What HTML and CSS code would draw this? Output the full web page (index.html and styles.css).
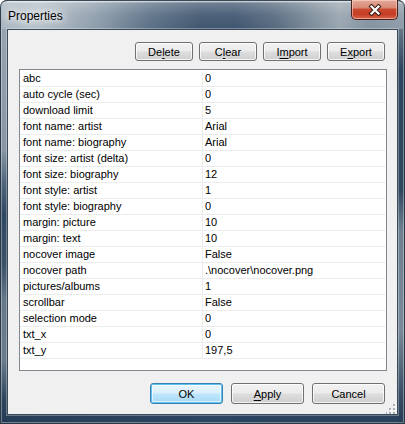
FILE: index.html
```html
<!DOCTYPE html>
<html>
<head>
<meta charset="utf-8">
<link rel="stylesheet" href="styles.css">
</head>
<body>
<div class="window">
  <div class="titlebar">
    <span class="title">Properties</span>
    <div class="close">
      <svg width="14" height="12" viewBox="0 0 14 12">
        <path d="M3.5 2.5 L10.5 9.5 M10.5 2.5 L3.5 9.5" stroke="#3b1c16" stroke-width="4.2" stroke-linecap="square" fill="none"/>
        <path d="M3.5 2.5 L10.5 9.5 M10.5 2.5 L3.5 9.5" stroke="#ffffff" stroke-width="2.2" stroke-linecap="square" fill="none"/>
      </svg>
    </div>
  </div>
  <div class="client">
    <div class="toolbar">
      <button class="btn small">De<u>l</u>ete</button>
      <button class="btn small">C<u>l</u>ear</button>
      <button class="btn small">I<u>m</u>port</button>
      <button class="btn small">E<u>x</u>port</button>
    </div>
    <div class="list">
      <div class="row"><div class="name">abc</div><div class="val">0</div></div>
      <div class="row"><div class="name">auto cycle (sec)</div><div class="val">0</div></div>
      <div class="row"><div class="name">download limit</div><div class="val">5</div></div>
      <div class="row"><div class="name">font name: artist</div><div class="val">Arial</div></div>
      <div class="row"><div class="name">font name: biography</div><div class="val">Arial</div></div>
      <div class="row"><div class="name">font size: artist (delta)</div><div class="val">0</div></div>
      <div class="row"><div class="name">font size: biography</div><div class="val">12</div></div>
      <div class="row"><div class="name">font style: artist</div><div class="val">1</div></div>
      <div class="row"><div class="name">font style: biography</div><div class="val">0</div></div>
      <div class="row"><div class="name">margin: picture</div><div class="val">10</div></div>
      <div class="row"><div class="name">margin: text</div><div class="val">10</div></div>
      <div class="row"><div class="name">nocover image</div><div class="val">False</div></div>
      <div class="row"><div class="name">nocover path</div><div class="val">.\nocover\nocover.png</div></div>
      <div class="row"><div class="name">pictures/albums</div><div class="val">1</div></div>
      <div class="row"><div class="name">scrollbar</div><div class="val">False</div></div>
      <div class="row"><div class="name">selection mode</div><div class="val">0</div></div>
      <div class="row"><div class="name">txt_x</div><div class="val">0</div></div>
      <div class="row"><div class="name">txt_y</div><div class="val">197,5</div></div>
    </div>
    <div class="footer">
      <button class="btn big default">OK</button>
      <button class="btn big"><u>A</u>pply</button>
      <button class="btn big">Cancel</button>
    </div>
    <svg class="grip" width="10" height="10" viewBox="0 0 10 10">
      <g fill="#ffffff">
        <rect x="8" y="1" width="2" height="2"/>
        <rect x="4" y="5" width="2" height="2"/><rect x="8" y="5" width="2" height="2"/>
        <rect x="0" y="9" width="2" height="1"/><rect x="4" y="9" width="2" height="1"/><rect x="8" y="9" width="2" height="1"/>
      </g>
      <g fill="#a8aeb4">
        <rect x="7" y="0" width="2" height="2"/>
        <rect x="3" y="4" width="2" height="2"/><rect x="7" y="4" width="2" height="2"/>
        <rect x="-1" y="8" width="2" height="2"/><rect x="3" y="8" width="2" height="2"/><rect x="7" y="8" width="2" height="2"/>
      </g>
    </svg>
  </div>
</div>
</body>
</html>
```
FILE: styles.css
```css
html, body {
  margin: 0;
  padding: 0;
  background: #ffffff;
}
body {
  width: 405px;
  height: 424px;
  overflow: hidden;
  font-family: "Liberation Sans", Arial, sans-serif;
}
.window {
  box-sizing: border-box;
  width: 405px;
  height: 424px;
  padding: 0 7px 9px 7px;
  border-radius: 7px 7px 0 0;
  display: flex;
  flex-direction: column;
  background:
    linear-gradient(to bottom, #9aa8b3 0px, #8796a3 150px, #4d637a 185px, #2f4862 215px, #3b5168 265px, #66798b 300px, #6a7c8c 360px, #2c445c 400px, #233a52 424px) left top / 7px 100% no-repeat,
    linear-gradient(to bottom, #909ea9 0px, #56697c 40px, #2d455e 70px, #30485f 190px, #6e8090 230px, #7a8a98 330px, #3c5269 390px, #243b53 424px) right top / 7px 100% no-repeat,
    linear-gradient(to right, #263d56 0%, #2c4560 50%, #2a425b 100%);
  box-shadow: inset 0 0 0 1px #2a3845, inset 0 0 0 2px rgba(255,255,255,0.35);
}
.titlebar {
  height: 29px;
  margin: 0 -7px;
  padding: 0 7px 0 8px;
  display: flex;
  align-items: flex-start;
  border-radius: 7px 7px 0 0;
  background:
    linear-gradient(to bottom, rgba(255,255,255,0.28) 0px, rgba(255,255,255,0.08) 14px, rgba(255,255,255,0) 29px),
    linear-gradient(to right, #a9b6c0 0px, #b4bfc8 40px, #8d9dab 95px, #5a6f85 150px, #3f566f 200px, #3e5570 235px, #56697e 275px, #7f8f9c 315px, #98a5af 340px, #8391a0 370px, #8e9ca8 405px);
  box-shadow: inset 0 1px 0 rgba(255,255,255,0.5), inset 1px 0 0 #2a3845, inset -1px 0 0 #2a3845, inset 0 2px 0 rgba(255,255,255,0.2);
  border-top: 1px solid #3a4856;
  box-sizing: border-box;
}
.title {
  font-size: 12px;
  line-height: 16px;
  margin-top: 7px;
  color: #000;
  text-shadow: 0 0 6px #ffffff, 0 0 10px #ffffff, 0 0 14px rgba(255,255,255,0.9);
}
.close {
  margin-left: auto;
  margin-top: -1px;
  width: 47px;
  height: 20px;
  box-sizing: border-box;
  border: 1px solid #4a2018;
  border-top: none;
  border-radius: 0 0 5px 5px;
  display: flex;
  align-items: center;
  justify-content: center;
  background: linear-gradient(to bottom, #e5a999 0%, #d88a76 40%, #c8492f 50%, #c43d24 75%, #d8664c 100%);
  box-shadow: inset 0 0 0 1px rgba(255,220,210,0.55);
}
.close svg {
  display: block;
  margin-top: 1px;
}
.client {
  position: relative;
  flex: 1;
  box-sizing: border-box;
  border: 1px solid #3b4a58;
  background: #f0f0f0;
  display: flex;
  flex-direction: column;
  padding: 12px 11px 10px 11px;
  box-shadow: 0 0 0 1px rgba(255,255,255,0.3);
}
.toolbar {
  display: flex;
  justify-content: flex-end;
  gap: 6px;
  margin-right: 1px;
}
.btn {
  box-sizing: border-box;
  font-family: "Liberation Sans", Arial, sans-serif;
  font-size: 11px;
  color: #000;
  padding: 0;
  margin: 0;
  border: 1px solid #707070;
  border-radius: 3px;
  background: linear-gradient(to bottom, #f2f2f2 0%, #ebebeb 48%, #dddddd 52%, #cfcfcf 100%);
  box-shadow: inset 0 0 0 1px rgba(255,255,255,0.75);
  display: flex;
  align-items: center;
  justify-content: center;
}
.btn u {
  text-decoration-thickness: 1px;
  text-underline-offset: 2px;
}
.small {
  width: 58px;
  height: 19px;
}
.big {
  width: 73px;
  height: 21px;
}
.default {
  border-color: #3c7fb1;
  background: linear-gradient(to bottom, #eaf6fd 0%, #d9f0fc 48%, #bee6fd 52%, #a7d9f5 100%);
  box-shadow: inset 0 0 0 1px #5fc1f0, inset 0 0 0 2px rgba(255,255,255,0.6);
}
.list {
  margin-top: 8px;
  width: 368px;
  height: 302px;
  box-sizing: border-box;
  border: 1px solid #828790;
  background: #ffffff;
  padding-top: 1px;
}
.row {
  display: flex;
  height: 16px;
  box-sizing: border-box;
  border-bottom: 1px solid #ececec;
  font-size: 11px;
  line-height: 15px;
  color: #000;
}
.name {
  width: 183px;
  box-sizing: border-box;
  padding-left: 3px;
  border-right: 1px solid #ececec;
  white-space: nowrap;
}
.val {
  padding-left: 2px;
  white-space: nowrap;
}
.footer {
  display: flex;
  justify-content: flex-end;
  gap: 8px;
  margin-top: 12px;
  margin-right: 1px;
}
.grip {
  position: absolute;
  right: 1px;
  bottom: 0px;
  display: block;
}
```
